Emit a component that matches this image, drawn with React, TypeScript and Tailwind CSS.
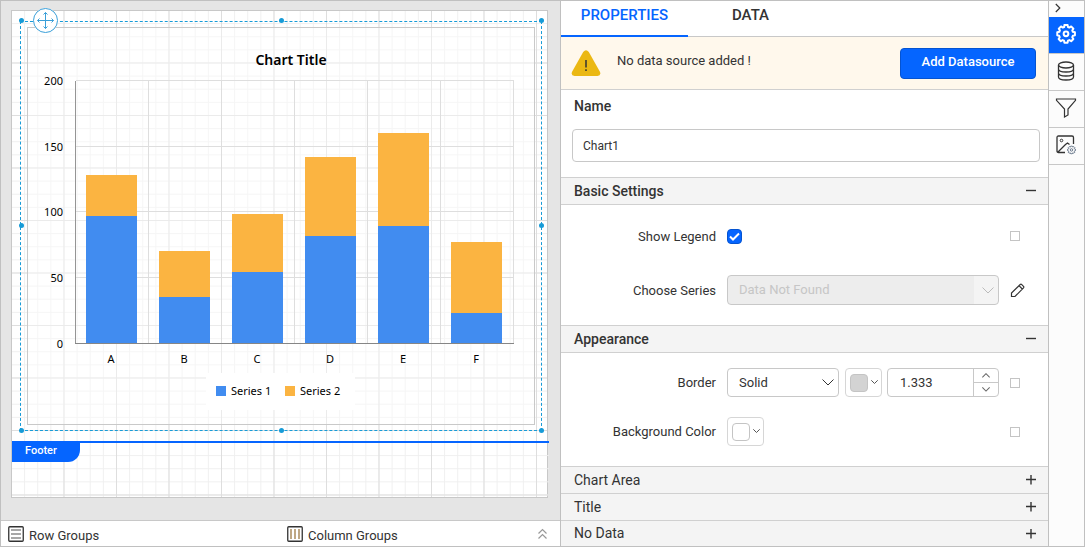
import { useState } from "react";
import type { ReactNode } from "react";

const categories = [
    { label: "A", series1: 97.5, series2: 31 },
    { label: "B", series1: 35.7, series2: 35 },
    { label: "C", series1: 54.8, series2: 44 },
    { label: "D", series1: 82.5, series2: 60.4 },
    { label: "E", series1: 90, series2: 70.5 },
    { label: "F", series1: 23.6, series2: 54 },
];

const ticks = [200, 150, 100, 50, 0];

// plot area inside the chart's view box
const plot = { left: 48, top: 53, width: 438, height: 263 };
const step = plot.width / categories.length;
const toHeight = (value: number) => Math.round((value / 200) * plot.height);

function Chart() {
    const bottom = plot.top + plot.height;
    return (
        <svg
            viewBox="0 0 506 396"
            className="block h-auto w-full bg-white/40 font-['Noto_Sans',sans-serif] text-[11px]"
            role="img"
            aria-label="Chart Title"
        >
            <text x="263" y="37" textAnchor="middle" fontSize="14" fontWeight="600">Chart Title</text>
            {ticks.map((tick) => {
                const y = bottom - toHeight(tick);
                return (
                    <g key={tick}>
                        <rect x={plot.left} y={y - 1} width={plot.width} height="1" fill="#dedede" />
                        <text x="35" y={y + 4} textAnchor="end">{tick}</text>
                    </g>
                );
            })}
            {categories.map((item, i) => {
                const x = plot.left + i * step;
                const h1 = toHeight(item.series1);
                const h2 = toHeight(item.series2);
                return (
                    <g key={item.label}>
                        <rect x={x + step - 1} y={plot.top} width="1" height={plot.height} fill="#dedede" />
                        <rect x={x + 10} y={bottom - h1 - h2} width="51" height={h2} fill="#fbb441" />
                        <rect x={x + 10} y={bottom - h1} width="51" height={h1} fill="#418cf0" />
                        <text x={x + 35} y={bottom + 19} textAnchor="middle">{item.label}</text>
                    </g>
                );
            })}
            <rect x="47" y={plot.top} width="1" height={plot.height} fill="#959595" />
            <rect x="47" y={bottom - 1} width="439" height="1" fill="#868686" />
            <rect x="178" y="345" width="149" height="37" fill="#fff" />
            <rect x="188" y="358" width="10" height="10" fill="#418cf0" />
            <text x="203" y="367">Series 1</text>
            <rect x="257" y="358" width="10" height="10" fill="#fbb441" />
            <text x="272" y="367">Series 2</text>
        </svg>
    );
}

const gridLines =
    "bg-[linear-gradient(to_right,#dedede_1px,transparent_1px),linear-gradient(to_bottom,#dedede_1px,transparent_1px),linear-gradient(to_right,#efefef_1px,transparent_1px),linear-gradient(to_bottom,#efefef_1px,transparent_1px)] bg-[size:52.5px_52.5px,52.5px_52.5px,13.125px_13.125px,13.125px_13.125px] bg-[position:-1px_-1px]";

const handles = [
    "-left-0.5 -top-1",
    "left-1/2 -ml-0.5 -top-1",
    "-right-[3px] -top-1",
    "-left-0.5 top-1/2 -mt-[3px]",
    "-right-[3px] top-1/2 -mt-[3px]",
    "-left-0.5 -bottom-[3px]",
    "left-1/2 -ml-0.5 -bottom-[3px]",
    "-right-[3px] -bottom-[3px]",
];

function DesignSurface() {
    return (
        <div className="flex-1 bg-[#e5e5e5] pt-[9px] pr-3 pb-5 pl-2.5">
            <div className="border border-[#c8c8c8] bg-white">
                <div className={`pt-2.5 pr-[5px] pb-2.5 pl-2 ${gridLines}`}>
                    <div className="relative border border-dashed border-[#179bd7] px-1.5 py-[5px]">
                        <div className="border border-[#c9c9c9]">
                            <Chart />
                        </div>
                        {handles.map((place) => (
                            <span key={place} className={`absolute size-[5px] rounded-full bg-[#179bd7] ${place}`} />
                        ))}
                        <button aria-label="Move" className="absolute -top-3.5 left-3 rounded-full bg-white">
                            <svg width="25" height="25" viewBox="0 0 25 25" fill="none" stroke="#3a9fd8">
                                <circle cx="12.5" cy="12.5" r="12" />
                                <path d="M12.5 4.5v16M4.5 12.5h16M10.5 6.5l2-2 2 2M10.5 18.5l2 2 2-2M6.5 10.5l-2 2 2 2M18.5 10.5l2 2-2 2" />
                            </svg>
                        </button>
                    </div>
                </div>
                <div className={`-mr-0.5 h-14 border-t-2 border-[#0565ff] ${gridLines}`}>
                    <div className="h-[19px] w-[68px] rounded-br-xl bg-[#0565ff] pl-[13px] text-[11px] leading-[15px] font-medium text-white">
                        Footer
                    </div>
                </div>
            </div>
        </div>
    );
}

function GroupsBar() {
    return (
        <div className="flex h-[26px] items-center border-t border-[#c8c8c8] bg-white pl-[7px] text-[13px] text-[#333]">
            <div className="flex w-1/2 items-center gap-[5px]">
                <svg width="16" height="16" viewBox="0 0 16 16" fill="none" stroke="#333">
                    <rect x=".75" y=".75" width="14.5" height="14.5" rx="1" strokeWidth="1.3" />
                    <path d="M3 4h10M3 8h10M3 12h10" stroke="#8a8a8a" strokeWidth="1.6" />
                </svg>
                <span className="pt-1">Row Groups</span>
            </div>
            <div className="flex flex-1 items-center gap-[5px] pl-[3px]">
                <svg width="16" height="16" viewBox="0 0 16 16" fill="none" stroke="#333">
                    <rect x=".75" y=".75" width="14.5" height="14.5" rx="1" strokeWidth="1.3" />
                    <path d="M4 3v10M8 3v10M12 3v10" stroke="#a58452" strokeWidth="1.4" />
                </svg>
                <span className="pt-1">Column Groups</span>
            </div>
            <button aria-label="Expand groups" className="mr-3">
                <svg width="11" height="12" viewBox="0 0 11 12" fill="none" stroke="#999" strokeWidth="1.2">
                    <path d="M1.5 5.5l4-4 4 4M1.5 10.5l4-4 4 4" />
                </svg>
            </button>
        </div>
    );
}

function Chevron({ className, up }: { className: string; up?: boolean }) {
    return (
        <svg viewBox="0 0 12 7" className={className} fill="none" stroke="currentColor">
            <path d={up ? "M.5 6.5L6 1l5.5 5.5" : "M.5.5L6 6 11.5.5"} vectorEffect="non-scaling-stroke" />
        </svg>
    );
}

function Section({ title, children }: { title: string; children?: ReactNode }) {
    const [open, setOpen] = useState(Boolean(children));
    return (
        <section className="leading-[26px] last:flex-1 last:bg-[#f4f4f4] last:leading-[25px]">
            <h3>
                <button
                    aria-expanded={open}
                    onClick={() => setOpen(!open)}
                    className={`flex w-full items-center justify-between border-t border-[#d0d0d0] bg-[#f4f4f4] pr-3 pl-[13px] text-[14px] ${open ? "border-b font-medium" : ""}`}
                >
                    {title}
                    <svg width="10" height="10" viewBox="0 0 10 10" stroke="#333" strokeWidth="1.4">
                        <path d={open ? "M0 4.5h10" : "M0 4.5h10M5 0v9.5"} />
                    </svg>
                </button>
            </h3>
            {open && children}
        </section>
    );
}

function Row({ label, id, action, children }: { label: string; id: string; action?: ReactNode; children: ReactNode }) {
    return (
        <div className="flex items-center gap-[11px] leading-5">
            <label htmlFor={id} className="w-[155px] pt-px text-right">{label}</label>
            <div className="flex min-w-0 flex-1 items-center justify-between">{children}</div>
            <div className="flex w-[38px] items-center">
                {action ?? <button aria-label={`${label} options`} className="size-2.5 border border-[#c4c4c4]" />}
            </div>
        </div>
    );
}

function ColorPicker({ id, label, swatch }: { id?: string; label: string; swatch: string }) {
    return (
        <button id={id} aria-label={label} className="flex h-[29px] w-[37px] items-center gap-[3px] rounded border border-[#d6d6d6] pl-1">
            <span className={`size-[18px] rounded-sm border border-[#c4c4c4] ${swatch}`} />
            <Chevron className="w-[7px] text-[#555]" />
        </button>
    );
}

function PropertiesPanel() {
    const [legend, setLegend] = useState(true);
    const [name, setName] = useState("Chart1");
    const [width, setWidth] = useState("1.333");

    const stepWidth = (amount: number) => setWidth(String(Number((Number(width) + amount).toFixed(3))));

    return (
        <div className="flex w-[488px] shrink-0 flex-col border-l border-[#c0c0c0] bg-white text-[13px] text-[#333]">
            <div role="tablist" className="flex h-9 border-b border-[#c8c8c8] text-[15px] font-medium">
                <button role="tab" aria-selected="true" className="-mb-px w-[127px] border-b-2 border-[#0565ff] pb-[5px] text-[#0565ff]">
                    PROPERTIES
                </button>
                <button role="tab" aria-selected="false" className="w-[125px] pb-1.5">DATA</button>
            </div>

            <div className="flex h-[53px] items-center border-b border-[#d0d0d0] bg-[#fff8ec] pr-3 pl-2.5">
                <svg width="30" height="26" viewBox="0 0 30 26">
                    <path d="M12.2 2Q15-1.5 17.8 2L28.8 21.5Q30.5 25.5 26.5 26H3.5Q-.5 25.5 1.2 21.5Z" fill="#ebb813" />
                    <path d="M15 10v7.5M15 19.2v1.8" stroke="#333" strokeWidth="1.5" />
                </svg>
                <span className="flex-1 pb-1 pl-4">No data source added !</span>
                <button className="h-[31px] w-[136px] rounded border border-[#0453d1] bg-[#0565ff] pb-0.5 font-medium text-white">
                    Add Datasource
                </button>
            </div>

            <div className="pt-1.5 pr-2 pb-[15px] pl-[11px]">
                <label htmlFor="name" className="block pl-0.5 text-[14px] leading-5 font-medium">Name</label>
                <input
                    id="name"
                    value={name}
                    onChange={(e) => setName(e.target.value)}
                    className="mt-[13px] block h-[33px] w-full rounded border border-[#c8c8c8] px-2.5 text-xs"
                />
            </div>

            <Section title="Basic Settings">
                <div className="flex flex-col gap-6 pt-4 pb-5">
                    <Row label="Show Legend" id="legend">
                        <span className="grid h-[30px] items-center">
                            <input
                                id="legend"
                                type="checkbox"
                                checked={legend}
                                onChange={(e) => setLegend(e.target.checked)}
                                className="col-start-1 row-start-1 size-[15px] appearance-none rounded border border-[#999] checked:border-[#0453d1] checked:bg-[#0565ff]"
                            />
                            <svg viewBox="0 0 15 15" className="pointer-events-none col-start-1 row-start-1 size-[15px]" fill="none" stroke="#fff" strokeWidth="2">
                                <path d="M3 7.5l3 3 6-6" />
                            </svg>
                        </span>
                    </Row>
                    <Row
                        label="Choose Series"
                        id="series"
                        action={
                            <button aria-label="Edit series">
                                <svg width="15" height="15" viewBox="0 0 15 15" fill="none" stroke="#333" strokeWidth="1.2">
                                    <path d="M1.5 13.5v-3.5L10.2 1.5q.8-.6 1.6.1l1.7 1.7q.7.8 0 1.6L5 13.5zM9 2.7l3.3 3.3" />
                                </svg>
                            </button>
                        }
                    >
                        <div className="grid w-full items-center">
                            <select id="series" disabled className="col-start-1 row-start-1 h-[30px] appearance-none rounded border border-[#c8c8c8] bg-[linear-gradient(to_left,#f4f4f4_24px,#ededed_24px)] px-[11px] text-[#c6c6c6] opacity-100">
                                <option>Data Not Found</option>
                            </select>
                            <Chevron className="pointer-events-none col-start-1 row-start-1 mr-[5px] w-3 justify-self-end text-[#bbb]" />
                        </div>
                    </Row>
                </div>
            </Section>

            <Section title="Appearance">
                <div className="flex flex-col gap-5 pt-[15px] pb-5">
                    <Row label="Border" id="border">
                        <div className="grid w-28 items-center">
                            <select id="border" className="col-start-1 row-start-1 h-[29px] appearance-none rounded border border-[#c8c8c8] px-[11px]">
                                <option>Solid</option>
                                <option>Dashed</option>
                                <option>None</option>
                            </select>
                            <Chevron className="pointer-events-none col-start-1 row-start-1 mr-[5px] w-3 justify-self-end" />
                        </div>
                        <ColorPicker label="Border color" swatch="bg-[#d3d3d3]" />
                        <div className="flex h-[29px] w-28 overflow-hidden rounded border border-[#c8c8c8]">
                            <input
                                aria-label="Border width"
                                value={width}
                                onChange={(e) => setWidth(e.target.value)}
                                className="min-w-0 flex-1 px-3"
                            />
                            <div className="grid w-[25px] grid-rows-2 divide-y divide-[#c8c8c8] border-l border-[#c8c8c8] text-[#666]">
                                <button aria-label="Increase" onClick={() => stepWidth(1)} className="grid place-items-center">
                                    <Chevron up className="w-2" />
                                </button>
                                <button aria-label="Decrease" onClick={() => stepWidth(-1)} className="grid place-items-center">
                                    <Chevron className="w-2" />
                                </button>
                            </div>
                        </div>
                    </Row>
                    <Row label="Background Color" id="background">
                        <ColorPicker id="background" label="Background Color" swatch="bg-white" />
                    </Row>
                </div>
            </Section>

            <Section title="Chart Area" />
            <Section title="Title" />
            <Section title="No Data" />
        </div>
    );
}

// outline of an eight-toothed gear, about 20 x 20
const gear =
    "M8.3 1h3.4l.5 2.3 1.5.6 2-1.2 2.4 2.4-1.2 2 .6 1.5 2.3.5v3.4l-2.3.5-.6 1.5 1.2 2-2.4 2.4-2-1.2-1.5.6-.5 2.3H8.3l-.5-2.3-1.5-.6-2 1.2-2.4-2.4 1.2-2-.6-1.5L.4 12.5V9.1l2.3-.5.6-1.5-1.2-2 2.4-2.4 2 1.2 1.5-.6z";

const railButton = "grid h-[37px] w-full place-items-center border-b border-[#c8c8c8] pr-0.5 pb-0.5";

function ToolRail() {
    return (
        <nav aria-label="Panels" className="w-9 shrink-0 border-l border-[#c0c0c0] bg-[#fcfcfc] text-[#333]">
            <button aria-label="Collapse" className="flex h-4 w-full items-center pb-0.5 pl-1.5">
                <svg width="6" height="10" viewBox="0 0 6 10" fill="none" stroke="currentColor" strokeWidth="1.2">
                    <path d="M.8 1l4 4-4 4" />
                </svg>
            </button>
            <button aria-label="Properties" className={`${railButton} bg-[#0565ff] text-white`}>
                <svg width="20" height="20" viewBox="-1 0 22 22" fill="none" stroke="currentColor" strokeWidth="2.2" strokeLinejoin="round">
                    <path d={gear} />
                    <circle cx="10" cy="10.8" r="2.6" />
                </svg>
            </button>
            <button aria-label="Data" className={railButton}>
                <svg width="18" height="20" viewBox="0 0 18 20" fill="none" stroke="currentColor" strokeWidth="1.3">
                    <ellipse cx="9" cy="4" rx="7.5" ry="3" />
                    <path d="M1.5 4v12c0 1.7 3.3 3 7.5 3s7.5-1.3 7.5-3V4M1.5 8c0 1.7 3.3 3 7.5 3s7.5-1.3 7.5-3M1.5 12c0 1.7 3.3 3 7.5 3s7.5-1.3 7.5-3" />
                </svg>
            </button>
            <button aria-label="Filter" className={railButton}>
                <svg width="22" height="20" viewBox="0 0 22 20" fill="none" stroke="currentColor" strokeWidth="1.2">
                    <path d="M1.5 1h19v1.3L13 11v6l-3.5 2v-8L1.5 2.3z" />
                </svg>
            </button>
            <button aria-label="Image settings" className={railButton}>
                <svg width="20" height="20" viewBox="0 0 20 20" fill="none" stroke="currentColor" strokeWidth="1.3">
                    <path d="M9 17.5H2.5q-1.5 0-1.5-1.5V2.5Q1 1 2.5 1H16q1.5 0 1.5 1.5V9M2 17l7.5-7.5 2-1.5 2 1.5" />
                    <circle cx="5.5" cy="5.5" r="1.3" strokeWidth="1" />
                    <svg x="11" y="10.5" width="9" height="9" viewBox="-1 0 22 22" stroke="#5b6b80" strokeWidth="2.2">
                        <path d={gear} />
                        <circle cx="10" cy="10.8" r="3" />
                    </svg>
                </svg>
            </button>
        </nav>
    );
}

export default function App() {
    return (
        <div className="flex min-h-screen border border-[#c0c0c0] font-[Roboto,sans-serif]">
            <main className="flex min-w-0 flex-1 flex-col">
                <DesignSurface />
                <GroupsBar />
            </main>
            <PropertiesPanel />
            <ToolRail />
        </div>
    );
}
